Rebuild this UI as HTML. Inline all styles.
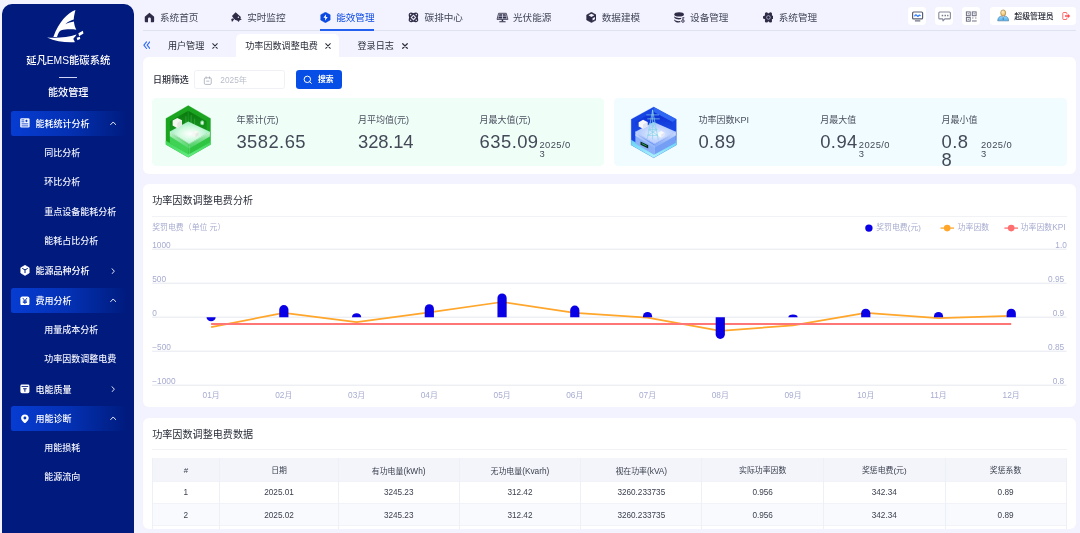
<!DOCTYPE html>
<html lang="zh-CN">
<head>
<meta charset="utf-8">
<title>延凡EMS能碳系统</title>
<style>
*{box-sizing:border-box;margin:0;padding:0}
html,body{width:1080px;height:533px;overflow:hidden}
body{background:#f2f3ff;font-family:"Liberation Sans","Noto Sans CJK SC",sans-serif;color:#2a2e3a;position:relative}
#root{position:absolute;left:0;top:0;width:1080px;height:533px;overflow:hidden;will-change:transform}
.abs{position:absolute}
/* sidebar */
#side{position:absolute;left:2.3px;top:4.2px;width:131.8px;height:540px;background:#001a7d;border-radius:10px 10px 0 0;color:#fff}
#side .logo{position:absolute;left:37.7px;top:.8px;width:60px;height:45px}
#side .title{position:absolute;left:0;width:100%;top:50.1px;text-align:center;font-size:10.3px;font-weight:500;line-height:14px}
#side .dash{position:absolute;left:56.8px;top:72.6px;width:18.2px;height:.9px;background:#cfd6f5}
#side .sub{position:absolute;left:0;width:100%;top:82px;text-align:center;font-size:10.1px;font-weight:500;line-height:14px}
.mi{position:absolute;left:9px;width:114.3px;height:25px;border-radius:2.5px;font-size:9px;font-weight:500;line-height:27px;color:#fff;white-space:nowrap}
.mi.act{background:linear-gradient(90deg,#073cd2 0%,#0431b4 50%,#01228e 85%,#001b80 100%)}
.mi .ic{position:absolute;left:8.8px;top:7.5px;width:9.8px;height:9.8px}
.mi .ic.big{left:8.9px;top:7px;width:10px;height:10.8px}
.mi .tx{position:absolute;left:24.3px;top:0}
.mi .ch{position:absolute;left:98.6px;top:9.8px;width:6.4px;height:4.3px}
.mi .ch.r{left:99.8px;top:9.5px;width:4.3px;height:6.4px}
.si{position:absolute;left:42px;font-size:9px;font-weight:500;line-height:14px;color:#eef1fc;white-space:nowrap}
/* top nav */
#nav{position:absolute;left:143.3px;top:0;width:932.7px;height:30.6px;border-bottom:1px solid #dfe2ef}
.ni{position:absolute;top:9.6px;height:15px;font-size:9.6px;line-height:15px;color:#44475a;white-space:nowrap}
.ni svg{position:absolute;left:-.1px;top:2.3px;width:10.9px;height:10.9px}
.ni span{position:absolute;left:16.2px;top:0}
.ni.act{color:#0b49e2}
#nav .ul{position:absolute;left:176.4px;top:29px;width:54.6px;height:1.6px;background:#2360f0}
.tb{position:absolute;top:6.7px;width:18.1px;height:18.1px;background:#fff;border-radius:3.4px}
.tb svg{position:absolute;left:0;top:0;width:18.1px;height:18.1px}
.ub{position:absolute;top:6.7px;width:86.2px;height:18.1px;background:#fff;border-radius:3.4px;font-size:7.9px;font-weight:500;line-height:19.2px;color:#1f2330;white-space:nowrap}
.ub .ua{position:absolute;left:7.3px;top:2.6px;width:12.4px;height:12.4px}
.ub span{position:absolute;left:24.5px;top:0}
.ub .lo{position:absolute;left:71.6px;top:3.9px;width:10px;height:10px}
/* tabs */
.tab{position:absolute;top:38.7px;font-size:9.1px;line-height:15px;color:#2a2e3a;white-space:nowrap}
.tabx{position:absolute;top:42.6px;width:6px;height:6px}
#tabact{position:absolute;left:236.2px;top:33.8px;width:102.8px;height:26px;background:#fff;border-radius:5px 5px 0 0}
/* cards */
.card{position:absolute;background:#fff;border-radius:6px}
.ct{position:absolute;left:9px;font-size:10.1px;line-height:16px;color:#2a2e3a;white-space:nowrap}
.cl{position:absolute;left:9px;right:9px;height:1px;background:#f1f2f6}
.fl{position:absolute;font-size:8.95px;font-weight:500;line-height:14px;color:#2a2e3a;white-space:nowrap}
.inp{position:absolute;border:1px solid #f0f1f6;border-radius:2.5px;background:#fff;font-size:8.3px;line-height:18.6px;color:#b9bdcb}
.inp svg{position:absolute;left:7.7px;top:4.5px;width:9.6px;height:9.6px}
.inp span{position:absolute;left:25px;top:0}
.btn{position:absolute;border-radius:3.2px;background:#074ee6;color:#fff;font-size:7.8px;font-weight:700;line-height:20.2px}
.btn svg{position:absolute;left:7px;top:4.6px;width:9.4px;height:9.4px}
.btn span{position:absolute;left:21.6px;top:0}
.stat{position:absolute;top:97.6px;height:68px;border-radius:4.5px}
.sl{position:absolute;top:16.2px;font-size:9px;line-height:12px;color:#4a4f5e;white-space:nowrap}
.sv{position:absolute;top:35.8px;font-size:18.4px;line-height:18.1px;color:#434957;white-space:nowrap;letter-spacing:.45px}
.ss{position:absolute;top:43.6px;font-size:9.4px;line-height:8.6px;color:#434957;width:34px;word-break:break-all;letter-spacing:.4px}
/* chart */
.ax{position:absolute;font-size:7.9px;line-height:11px;color:#a7acd0;white-space:nowrap}
.ax.r{text-align:right}
.ax.d,.ax .d{font-size:8.3px}
.ax.c{text-align:center}
/* table */
.tr{position:absolute;left:9.2px;width:914.2px;border-bottom:1px solid #f2f3f9}
.td{position:absolute;text-align:center;font-size:8.2px;color:#3a3f4d;white-space:nowrap;border-right:1px solid #eef0f7}
.td.th{font-size:7.9px;color:#3a3f4d}
.td.th i{font-style:normal;font-size:8.3px}
.vl{position:absolute;top:40.8px;width:1px;height:80px;background:#eef0f7}

</style>
</head>
<body><div id="root">
<div id="side">
<svg class="logo" viewBox="0 0 711 533"><g fill="#fff">
<path d="M420 60 C330 92 222 200 158 380 L202 380 C214 332 230 306 252 298 C300 286 380 285 430 293 C414 262 405 230 402 196 C370 200 330 214 300 228 C328 200 368 180 400 172 C402 140 410 100 420 60 Z"/>
<path d="M84 384 C180 396 330 386 432 350 C426 374 404 384 396 400 C396 416 416 424 410 440 C300 446 180 430 84 384 Z"/>
<path d="M455 336 L508 304 L515 338 L463 370 Z"/><path d="M435 389 L472 377 L477 402 L443 417 Z"/>
</g></svg>
<div class="title">延凡EMS能碳系统</div>
<div class="dash"></div>
<div class="sub">能效管理</div>
<div class="mi act" style="top:106.70px"><svg class="ic" viewBox="0 0 20 20"><rect x="0.4" y="0.4" width="19.2" height="19.2" rx="2.6" fill="#f4f6ff"/><g stroke="#0a3cc8" stroke-width="1.7" stroke-linecap="round"><path d="M3.800 3.900 H8 M3.800 7.700 H8 M4 11.900 H16 M4 16.100 H16"/></g><path d="M13.200 3.200 L16 6 L13.200 8.800 L10.400 6 Z" fill="#0a3cc8"/></svg><span class="tx">能耗统计分析</span><svg class="ch" viewBox="0 0 12 8"><path d="M1.2 6.8 L6 1.8 L10.8 6.8" stroke="#fff" stroke-width="1.7" fill="none" stroke-linecap="round" stroke-linejoin="round"/></svg></div>
<div class="si" style="top:141.42px">同比分析</div>
<div class="si" style="top:170.94px">环比分析</div>
<div class="si" style="top:200.46px">重点设备能耗分析</div>
<div class="si" style="top:229.98px">能耗占比分析</div>
<div class="mi" style="top:254.30px"><svg class="ic big" viewBox="0 0 20 21.6" preserveAspectRatio="none"><path d="M10 0.6 L18.4 5.2 V14.8 L10 19.4 L1.6 14.8 V5.2 Z" transform="scale(1 1.08)" stroke="#fff" stroke-width="1.2" stroke-linejoin="round" fill="#fff"/><path d="M5.2 7.2 L10 9.8 L14.8 7.2 M10 9.8 V15.4" stroke="#001a7d" stroke-width="2" fill="none" stroke-linecap="round" stroke-linejoin="round"/></svg><span class="tx">能源品种分析</span><svg class="ch r" viewBox="0 0 8 12"><path d="M1.6 1.2 L6.4 6 L1.6 10.8" stroke="#fff" stroke-width="1.7" fill="none" stroke-linecap="round" stroke-linejoin="round"/></svg></div>
<div class="mi act" style="top:283.82px"><svg class="ic" viewBox="0 0 20 20"><rect x="0.8" y="0.8" width="18.4" height="18.4" rx="4" fill="#fff"/><path d="M6 4.6 L10 9.6 L14 4.6 M10 9.6 V15.6 M6.6 10.4 H13.4 M6.6 13 H13.4" stroke="#0434c0" stroke-width="1.9" fill="none" stroke-linecap="round" stroke-linejoin="round"/></svg><span class="tx">费用分析</span><svg class="ch" viewBox="0 0 12 8"><path d="M1.2 6.8 L6 1.8 L10.8 6.8" stroke="#fff" stroke-width="1.7" fill="none" stroke-linecap="round" stroke-linejoin="round"/></svg></div>
<div class="si" style="top:318.54px">用量成本分析</div>
<div class="si" style="top:348.06px">功率因数调整电费</div>
<div class="mi" style="top:372.38px"><svg class="ic" viewBox="0 0 20 20"><rect x="0.8" y="1.2" width="18.4" height="17.6" rx="3" fill="#fff"/><rect x="3.2" y="4" width="13.6" height="1.8" fill="#001a7d"/><path d="M6.4 8.6 H13.6 V10.6 H11 V15.6 H9 V10.6 H6.4 Z" fill="#001a7d"/></svg><span class="tx">电能质量</span><svg class="ch r" viewBox="0 0 8 12"><path d="M1.6 1.2 L6.4 6 L1.6 10.8" stroke="#fff" stroke-width="1.7" fill="none" stroke-linecap="round" stroke-linejoin="round"/></svg></div>
<div class="mi act" style="top:401.90px"><svg class="ic" viewBox="0 0 20 20"><path d="M10 0.8 C5.3 0.8 2.2 4.2 2.2 8.2 C2.2 13 7.4 16.6 10 19.4 C12.6 16.6 17.8 13 17.8 8.2 C17.8 4.2 14.7 0.8 10 0.8 Z" fill="#fff"/><circle cx="10" cy="8" r="3" fill="#0434c0"/></svg><span class="tx">用能诊断</span><svg class="ch" viewBox="0 0 12 8"><path d="M1.2 6.8 L6 1.8 L10.8 6.8" stroke="#fff" stroke-width="1.7" fill="none" stroke-linecap="round" stroke-linejoin="round"/></svg></div>
<div class="si" style="top:436.62px">用能损耗</div>
<div class="si" style="top:466.14px">能源流向</div>
</div>
<div id="nav">
<div class="ni" style="left:0.5px"><svg viewBox="0 0 20 20"><path d="M10 1.2 L18.6 8.6 V17.2 A1.6 1.6 0 0 1 17 18.8 H12.6 V12.6 A2.6 2.6 0 0 0 7.4 12.6 V18.8 H3 A1.6 1.6 0 0 1 1.4 17.2 V8.6 Z" fill="#2e2c46"/></svg><span>系统首页</span></div>
<div class="ni" style="left:87.7px"><svg viewBox="0 0 20 20"><path d="M8.500 0.400 L18.200 9.400 L17.200 12 L19.900 13.600 L15.800 15.300 L14.200 18.300 L11.400 15.700 L8 14.600 L5.400 12.400 L1.800 7.300 Z" fill="#2e2c46"/><path d="M0.300 12.700 L4.400 11.600 L5.600 13.600 L1.800 18.300 Z" fill="#2e2c46"/><circle cx="13.600" cy="9.600" r="1.300" fill="#f2f3ff"/></svg><span>实时监控</span></div>
<div class="ni act" style="left:176.7px"><svg viewBox="0 0 20 20"><path d="M10 0.400 L18.600 5.200 V14.800 L10 19.600 L1.400 14.800 V5.200 Z" fill="#0b49e2" stroke="#0b49e2" stroke-width="1" stroke-linejoin="round"/><path d="M11.200 4 L6.200 10.600 H9.600 L9.200 16 L14.200 9.400 H10.800 Z" fill="#fff"/></svg><span>能效管理</span></div>
<div class="ni" style="left:265.1px"><svg viewBox="0 0 20 20" style="overflow:visible"><ellipse cx="10" cy="10" rx="10.800" ry="6.300" transform="rotate(45 10 10)" fill="#2e2c46"/><ellipse cx="10" cy="10" rx="10.800" ry="6.300" transform="rotate(-45 10 10)" fill="#2e2c46"/><path d="M10 4.600 L15.400 10 L10 15.400 L4.600 10 Z" fill="#e6e8f7"/><path d="M10 7.400 L12.600 10 L10 12.600 L7.400 10 Z" fill="#2e2c46"/><circle cx="4.800" cy="4.800" r="1.500" fill="#dcdff1"/><circle cx="15.200" cy="4.800" r="1.500" fill="#dcdff1"/><circle cx="4.800" cy="15.200" r="1.500" fill="#dcdff1"/><circle cx="15.200" cy="15.200" r="1.500" fill="#dcdff1"/></svg><span>碳排中心</span></div>
<div class="ni" style="left:353.5px"><svg viewBox="0 0 20 20" style="overflow:visible"><path d="M3 2.400 H17 L20 13.600 H0 Z" fill="#dfe1f2" stroke="#2e2c46" stroke-width="1.500" stroke-linejoin="round"/><path d="M4.300 4 H9.300 V7 H3.500 Z M10.700 4 H15.700 L16.500 7 H10.700 Z M3.200 8.400 H9.300 V12 H2.300 Z M10.700 8.400 H16.800 L17.700 12 H10.700 Z" fill="#2e2c46"/><rect x="8.600" y="14" width="2.800" height="3" fill="#2e2c46"/><rect x="4" y="16.800" width="12" height="2" rx="1" fill="#2e2c46"/></svg><span>光伏能源</span></div>
<div class="ni" style="left:442.3px"><svg viewBox="0 0 20 20"><path d="M10 0.600 L18.800 5.400 V14.600 L10 19.400 L1.200 14.600 V5.400 Z" fill="#2e2c46" stroke="#2e2c46" stroke-width="1" stroke-linejoin="round"/><path d="M10 3 L15.400 6 L10 9 L4.600 6 Z" fill="#f2f3ff"/><path d="M12 11.600 L16.400 9.200 V13.400 L12 15.800 Z" fill="#f2f3ff"/></svg><span>数据建模</span></div>
<div class="ni" style="left:530.6px"><svg viewBox="0 0 20 20"><ellipse cx="9.400" cy="4.400" rx="8.800" ry="3.900" fill="#2e2c46"/><path d="M0.600 8 C3 11.400 10 11.600 13.200 10.600 V13 C10 14.200 3 14 0.600 10.600 Z" fill="#2e2c46"/><path d="M0.600 13.400 C3 16.800 8 17.200 11.600 16.600 V19 C8 19.600 3 19.400 0.600 16 Z" fill="#2e2c46"/><circle cx="16.400" cy="16.600" r="2.300" fill="none" stroke="#2e2c46" stroke-width="1.700"/><path d="M16.400 9.600 V14.400 M16.400 10.600 H19" stroke="#2e2c46" stroke-width="1.700"/></svg><span>设备管理</span></div>
<div class="ni" style="left:619.3px"><svg viewBox="0 0 20 20"><circle cx="10" cy="10" r="7.600" fill="#2e2c46"/><circle cx="17.30" cy="10.00" r="3" fill="#2e2c46"/><circle cx="13.65" cy="16.32" r="3" fill="#2e2c46"/><circle cx="6.35" cy="16.32" r="3" fill="#2e2c46"/><circle cx="2.70" cy="10.00" r="3" fill="#2e2c46"/><circle cx="6.35" cy="3.68" r="3" fill="#2e2c46"/><circle cx="13.65" cy="3.68" r="3" fill="#2e2c46"/><circle cx="10" cy="10" r="3.300" fill="none" stroke="#c9cce4" stroke-width="1.400"/><path d="M9 8.200 L12 10 L9 11.800 Z" fill="#2e2c46" stroke="#2e2c46" stroke-width="0.400"/></svg><span>系统管理</span></div>
<div class="ul"></div>
<div class="tb" style="left:764.6px"><svg viewBox="0 0 18.100 18.100"><rect x="4.600" y="5" width="10" height="6.900" rx="1" fill="none" stroke="#5b5e73" stroke-width="1.200"/><path d="M6.900 13.900 H12.300" stroke="#5b5e73" stroke-width="1.100"/><path d="M6.800 8.900 C7.600 7.600 8.400 7.800 9 8.700 C9.600 9.600 10.200 9.700 10.800 8.700 C11.200 8 11.700 8 12.200 8.600" stroke="#2f7bff" stroke-width="1.300" fill="none" stroke-linecap="round"/></svg></div>
<div class="tb" style="left:791.7px"><svg viewBox="0 0 18.100 18.100"><path d="M4.800 5 H14.400 A1 1 0 0 1 15.400 6 V10.900 A1 1 0 0 1 14.400 11.900 H9.800 L8 13.900 L7.700 11.900 H4.800 A1 1 0 0 1 3.800 10.900 V6 A1 1 0 0 1 4.800 5 Z" fill="none" stroke="#858899" stroke-width="1.100" stroke-linejoin="round"/><rect x="6.700" y="7.800" width="1.500" height="1.500" fill="#777a8c"/><rect x="9.500" y="7.800" width="1.500" height="1.500" fill="#777a8c"/><rect x="12.100" y="7.800" width="1.300" height="1.500" fill="#777a8c"/></svg></div>
<div class="tb" style="left:818.9px"><svg viewBox="0 0 18.100 18.100"><g fill="none" stroke="#6b6e80" stroke-width="1"><rect x="4.400" y="4.900" width="3.800" height="3.800"/><rect x="10.300" y="4.900" width="3.800" height="3.800"/><rect x="4.400" y="10.400" width="3.800" height="3.800"/></g><path d="M5.700 6.800 H6.900 M11.600 6.800 H12.800 M5.700 12.300 H6.900 M10.200 11 H11.400 M13.200 11 H14.400 M10 14 H14.700" stroke="#6b6e80" stroke-width="1"/></svg></div>
<div class="ub" style="left:846.5px"><svg class="ua" viewBox="0 0 24 24"><defs><radialGradient id="hd" cx="0.4" cy="0.35" r="0.7"><stop offset="0" stop-color="#fff0c4"/><stop offset="1" stop-color="#e9b24f"/></radialGradient><linearGradient id="bd" x1="0" y1="0" x2="0" y2="1"><stop offset="0" stop-color="#9ad9fa"/><stop offset="1" stop-color="#4fb0ec"/></linearGradient></defs><path d="M1.400 23 C1.400 16.500 5.400 14.400 8.200 13.600 L12 15.800 L15.800 13.600 C18.600 14.400 22.600 16.500 22.600 23 Z" fill="url(#bd)" stroke="#3f719c" stroke-width="1.100" stroke-linejoin="round"/><path d="M12 17 V21" stroke="#2c4f73" stroke-width="1.200"/><ellipse cx="12" cy="7.600" rx="4.900" ry="5.900" fill="url(#hd)" stroke="#8a6a34" stroke-width="1"/></svg><span>超级管理员</span><svg class="lo" viewBox="0 0 20 20"><path d="M11.600 5.800 V4.600 A1.600 1.600 0 0 0 10 3 H5.200 A1.600 1.600 0 0 0 3.600 4.600 V15.400 A1.600 1.600 0 0 0 5.200 17 H10 A1.600 1.600 0 0 0 11.600 15.400 V14.200" fill="none" stroke="#ff4d4f" stroke-width="1.7" stroke-linecap="round"/><path d="M8 8.400 H13.600 V5.600 L18.400 10 L13.600 14.400 V11.600 H8 Z" fill="#ff4d4f"/></svg></div>
</div>
<svg class="abs" style="left:142.7px;top:41px;width:7.6px;height:8.4px" viewBox="0 0 15 16"><path d="M7 1.500 L1.800 8 L7 14.500 M13.400 1.500 L8.200 8 L13.400 14.500" fill="none" stroke="#2e69f8" stroke-width="2.2" stroke-linecap="round" stroke-linejoin="round"/></svg>
<div id="tabact"></div>
<div class="tab" style="left:167.9px">用户管理</div><svg class="tabx" style="left:212.1px" viewBox="0 0 10 10"><path d="M1.2 1.2 L8.8 8.8 M8.8 1.2 L1.2 8.8" stroke="#2a2e3a" stroke-width="1.7" stroke-linecap="round"/></svg>
<div class="tab" style="left:245.2px">功率因数调整电费</div><svg class="tabx" style="left:324.6px" viewBox="0 0 10 10"><path d="M1.2 1.2 L8.8 8.8 M8.8 1.2 L1.2 8.8" stroke="#2a2e3a" stroke-width="1.7" stroke-linecap="round"/></svg>
<div class="tab" style="left:357.5px">登录日志</div><svg class="tabx" style="left:401.7px" viewBox="0 0 10 10"><path d="M1.2 1.2 L8.8 8.8 M8.8 1.2 L1.2 8.8" stroke="#2a2e3a" stroke-width="2" stroke-linecap="round"/></svg>
<div class="card" id="c1" style="left:143.2px;top:56.8px;width:932.8px;height:117.6px"></div>
<div class="fl" style="left:153px;top:72.6px">日期筛选</div>
<div class="inp" style="left:194.3px;top:70.1px;width:90.5px;height:18.5px"><svg viewBox="0 0 16 16"><rect x="2.200" y="3" width="11.600" height="11" rx="2" fill="none" stroke="#a4a8b6" stroke-width="1.300"/><path d="M5.400 8.600 H10.600" stroke="#a4a8b6" stroke-width="1.300"/><path d="M5.200 1.400 V4 M10.800 1.400 V4" stroke="#a4a8b6" stroke-width="1.300" stroke-linecap="round"/></svg><span>2025年</span></div>
<div class="btn" style="left:296.3px;top:70.1px;width:45.3px;height:18.5px"><svg viewBox="0 0 16 16"><circle cx="7.400" cy="7.400" r="5.500" fill="none" stroke="#fff" stroke-width="1.700"/><path d="M11.600 11.600 L14.200 14.200" stroke="#fff" stroke-width="1.700" stroke-linecap="round"/></svg><span>搜索</span></div>
<div class="stat" style="left:152.2px;width:452.3px;background:#effff8"></div>
<div class="stat" style="left:613.9px;width:453.1px;background:#f0fcff"></div>
<div class="abs" style="left:0;top:97.6px;width:1080px;height:68px">
<div class="sl" style="left:236.4px">年累计(元)</div><div class="sv" style="left:236.4px">3582.65</div>
<div class="sl" style="left:358.1px">月平均值(元)</div><div class="sv" style="left:358.1px;letter-spacing:-0.15px">328.14</div>
<div class="sl" style="left:479.6px">月最大值(元)</div><div class="sv" style="left:479.6px">635.09</div><div class="ss" style="left:539.5px">2025/03</div>
<div class="sl" style="left:698.4px">功率因数KPI</div><div class="sv" style="left:698.4px">0.89</div>
<div class="sl" style="left:820.2px">月最大值</div><div class="sv" style="left:820.2px">0.94</div><div class="ss" style="left:858.8px">2025/03</div>
<div class="sl" style="left:941.6px">月最小值</div><div class="sv" style="left:941.6px;width:36px;white-space:normal;word-break:break-all">0.88</div><div class="ss" style="left:981.0px">2025/03</div>
</div>
<svg class="abs" style="left:158px;top:100px;width:60px;height:62px" viewBox="0 0 516 533">
<defs>
<radialGradient id="gp" cx="0.5" cy="0.55" r="0.6"><stop offset="0" stop-color="#ffffff"/><stop offset="0.45" stop-color="#d4fae2"/><stop offset="1" stop-color="#8fe9b4"/></radialGradient>
<linearGradient id="gw" x1="0" y1="0" x2="0" y2="1"><stop offset="0" stop-color="#0a790e"/><stop offset="1" stop-color="#1fae2a"/></linearGradient>
<linearGradient id="gb" x1="0" y1="0" x2="0" y2="1"><stop offset="0" stop-color="#3fd557"/><stop offset="1" stop-color="#63ee83"/></linearGradient>
<linearGradient id="gt" x1="0" y1="0" x2="0" y2="1"><stop offset="0" stop-color="#d9fbe6" stop-opacity="0.95"/><stop offset="1" stop-color="#7fe39a" stop-opacity="0.25"/></linearGradient>
</defs>
<path d="M260 48 L452 158 L452 382 L260 492 L68 382 L68 158 Z" fill="#1ba420" stroke="#1ba420" stroke-width="2" stroke-linejoin="round"/>
<path d="M260 92 L418 182 L418 300 L260 392 L102 300 L102 182 Z" fill="url(#gw)"/>
<path d="M260 92 L260 250" stroke="#2cbd38" stroke-width="5" opacity="0.6"/>
<path d="M68 352 L260 462 L452 352 L452 382 L260 492 L68 382 Z" fill="url(#gb)" stroke="#5be97c" stroke-width="2" stroke-linejoin="round"/>
<path d="M102 290 L262 385 L262 468 L102 372 Z" fill="#3fd254"/>
<path d="M262 385 L446 282 L446 366 L262 468 Z" fill="#30c443"/>
<path d="M102 270 L260 184 L446 274 L268 376 Z" fill="url(#gp)"/>
<path d="M102 270 L268 376 L446 274 L446 314 L268 420 L102 312 Z" fill="url(#gt)"/><path d="M102 272 L268 378 L446 276" fill="none" stroke="#eafff2" stroke-width="4" opacity="0.9"/>
<path d="M268 396 L268 470" stroke="#a8f5c0" stroke-width="4" opacity="0.8"/>
<path d="M240 140 V230 M285 130 V250 M315 160 V240" stroke="#bff5d2" stroke-width="3" opacity="0.55"/>
<path d="M126 176 L166 154 L206 174 L206 218 L166 242 L126 220 Z" fill="#f4f6f0"/>
<path d="M166 196 L206 174 L206 218 L166 242 Z" fill="#e2e8df"/>
<path d="M296 278 L324 262 L350 276 L350 306 L322 322 L296 308 Z" fill="#f6f8f3"/>
<path d="M322 292 L350 276 L350 306 L322 322 Z" fill="#e3e9e0"/>
<ellipse cx="380" cy="196" rx="17" ry="22" fill="#9fe8b0" opacity="0.8"/><ellipse cx="380" cy="196" rx="8" ry="12" fill="#e8fff0"/>
</svg>

<svg class="abs" style="left:624px;top:100px;width:60px;height:62px" viewBox="0 0 516 533">
<defs>
<linearGradient id="bw" x1="0" y1="0" x2="0" y2="1"><stop offset="0" stop-color="#0a2cd4"/><stop offset="1" stop-color="#2a63f0"/></linearGradient>
<radialGradient id="bp" cx="0.5" cy="0.55" r="0.6"><stop offset="0" stop-color="#eef4ff"/><stop offset="0.5" stop-color="#c4d6ff"/><stop offset="1" stop-color="#a4c0ff"/></radialGradient>
<linearGradient id="bb" x1="0" y1="0" x2="0" y2="1"><stop offset="0" stop-color="#5fd0f4"/><stop offset="1" stop-color="#b0f4fc"/></linearGradient>
<linearGradient id="bt" x1="0" y1="0" x2="0" y2="1"><stop offset="0" stop-color="#dbe7ff" stop-opacity="0.95"/><stop offset="1" stop-color="#9dbcfa" stop-opacity="0.3"/></linearGradient>
</defs>
<path d="M255 60 L450 166 L450 386 L255 496 L62 386 L62 166 Z" fill="#1645e4" stroke="#1645e4" stroke-width="2" stroke-linejoin="round"/>
<path d="M255 60 L450 166 L416 190 L255 104 Z" fill="#2f67f2"/>
<path d="M255 104 L416 190 L416 300 L255 392 L96 300 L96 190 Z" fill="url(#bw)"/>
<path d="M62 344 L255 454 L450 344 L450 386 L255 496 L62 386 Z" fill="url(#bb)" stroke="#8fe4f8" stroke-width="2" stroke-linejoin="round"/>
<path d="M98 292 L258 386 L258 470 L98 376 Z" fill="#8db1f9"/>
<path d="M258 386 L446 284 L446 368 L258 470 Z" fill="#759ff5"/>
<path d="M98 272 L255 190 L446 272 L262 376 Z" fill="url(#bp)"/>
<path d="M98 272 L262 376 L446 272 L446 306 L262 412 L98 308 Z" fill="url(#bt)"/>
<path d="M98 274 L262 378 L446 274" fill="none" stroke="#f0f5ff" stroke-width="4" opacity="0.9"/>
<path d="M262 396 L262 472" stroke="#c0dcff" stroke-width="4" opacity="0.8"/>
<g stroke="#86d4e6" stroke-width="6" fill="none" stroke-linecap="round">
<path d="M246 88 L200 334 M246 88 L294 340 M246 88 V336"/>
<path d="M196 128 H298 M204 162 H304 M222 204 H272 M214 254 H282 M206 304 H290"/>
<path d="M222 204 L282 254 M272 204 L214 254 M214 254 L290 304 M282 254 L206 304"/>
</g>
<path d="M126 192 L164 170 L202 190 L202 226 L164 248 L126 228 Z" fill="#f6f7fb"/>
<path d="M164 210 L202 190 L202 226 L164 248 Z" fill="#dfe4f2"/>
<path d="M294 282 L320 266 L346 280 L346 306 L320 322 L294 308 Z" fill="#f8f9fc"/>
<path d="M320 296 L346 280 L346 306 L320 322 Z" fill="#e1e6f3"/>
<path d="M142 356 L208 390 L208 418 L142 384 Z" fill="#0b2a1c"/>
<path d="M156 376 L192 394" stroke="#33d17a" stroke-width="6" stroke-linecap="round"/>
</svg>

<div class="card" id="c2" style="left:143.2px;top:183.9px;width:932.8px;height:223.4px"><div class="ct" style="top:8.8px">功率因数调整电费分析</div><div class="cl" style="top:31.9px"></div></div>
<div class="ax" style="left:152.2px;top:222.4px;font-size:7.9px">奖罚电费（单位 元）</div>
<div class="ax d" style="left:152.200px;top:239.6px">1000</div>
<div class="ax d" style="left:152.200px;top:273.6px">500</div>
<div class="ax d" style="left:152.200px;top:307.6px">0</div>
<div class="ax d" style="left:152.200px;top:341.6px">−500</div>
<div class="ax d" style="left:152.200px;top:375.6px">−1000</div>
<div class="ax r d" style="left:1036.9px;width:30px;top:239.6px">1.0</div>
<div class="ax r d" style="left:1034.2px;width:30px;top:273.6px">0.95</div>
<div class="ax r d" style="left:1034.2px;width:30px;top:307.6px">0.9</div>
<div class="ax r d" style="left:1034.2px;width:30px;top:341.6px">0.85</div>
<div class="ax r d" style="left:1034.2px;width:30px;top:375.6px">0.8</div>
<div class="ax c" style="left:196.1px;width:30px;top:390.0px"><span class="d">01</span>月</div>
<div class="ax c" style="left:268.8px;width:30px;top:390.0px"><span class="d">02</span>月</div>
<div class="ax c" style="left:341.6px;width:30px;top:390.0px"><span class="d">03</span>月</div>
<div class="ax c" style="left:414.3px;width:30px;top:390.0px"><span class="d">04</span>月</div>
<div class="ax c" style="left:487.1px;width:30px;top:390.0px"><span class="d">05</span>月</div>
<div class="ax c" style="left:559.8px;width:30px;top:390.0px"><span class="d">06</span>月</div>
<div class="ax c" style="left:632.5px;width:30px;top:390.0px"><span class="d">07</span>月</div>
<div class="ax c" style="left:705.3px;width:30px;top:390.0px"><span class="d">08</span>月</div>
<div class="ax c" style="left:778.0px;width:30px;top:390.0px"><span class="d">09</span>月</div>
<div class="ax c" style="left:850.8px;width:30px;top:390.0px"><span class="d">10</span>月</div>
<div class="ax c" style="left:923.5px;width:30px;top:390.0px"><span class="d">11</span>月</div>
<div class="ax c" style="left:996.2px;width:30px;top:390.0px"><span class="d">12</span>月</div>
<div class="ax" style="left:876.200px;top:222.400px">奖罚电费(元)</div><div class="ax" style="left:957.600px;top:222.400px">功率因数</div><div class="ax" style="left:1020.600px;top:222.400px">功率因数<span class="d">KPI</span></div>
<svg class="abs" style="left:0;top:0" width="1080" height="533" viewBox="0 0 1080 533">
<line x1="152.200" x2="1066.500" y1="249.2" y2="249.2" stroke="#e3e5ee" stroke-width="0.900"/>
<line x1="152.200" x2="1066.500" y1="283.2" y2="283.2" stroke="#e3e5ee" stroke-width="0.900"/>
<line x1="152.200" x2="1066.500" y1="317.2" y2="317.2" stroke="#e3e5ee" stroke-width="0.900"/>
<line x1="152.200" x2="1066.500" y1="351.2" y2="351.2" stroke="#e3e5ee" stroke-width="0.900"/>
<line x1="152.200" x2="1066.500" y1="385.2" y2="385.2" stroke="#e3e5ee" stroke-width="0.900"/>
<polyline points="211.1,327.2 283.8,312.8 356.6,322.2 429.3,312.3 502.1,302 574.8,312.8 647.5,317.7 720.3,330.8 793.0,325.4 865.8,312.8 938.5,318.2 1011.2,315.9" fill="none" stroke="#ffa62b" stroke-width="1.700" stroke-linejoin="round"/>
<line x1="211.1" x2="1011.2" y1="324" y2="324" stroke="#ff7676" stroke-width="2"/>
<path d="M206.50 317.2 V317.20 A4.60 4.10 0 0 0 215.70 317.20 V317.2 Z" fill="#0a00e6"/>
<path d="M279.24 317.2 V309.70 A4.60 4.60 0 0 1 288.44 309.70 V317.2 Z" fill="#0a00e6"/>
<path d="M351.98 317.2 V317.20 A4.60 4.00 0 0 1 361.18 317.20 V317.2 Z" fill="#0a00e6"/>
<path d="M424.72 317.2 V308.80 A4.60 4.60 0 0 1 433.92 308.80 V317.2 Z" fill="#0a00e6"/>
<path d="M497.46 317.2 V298.00 A4.60 4.60 0 0 1 506.66 298.00 V317.2 Z" fill="#0a00e6"/>
<path d="M570.20 317.2 V310.20 A4.60 4.60 0 0 1 579.40 310.20 V317.2 Z" fill="#0a00e6"/>
<path d="M642.94 317.2 V316.50 A4.60 4.60 0 0 1 652.14 316.50 V317.2 Z" fill="#0a00e6"/>
<path d="M715.68 317.2 V334.30 A4.60 4.60 0 0 0 724.88 334.30 V317.2 Z" fill="#0a00e6"/>
<path d="M788.42 317.2 V317.20 A4.60 2.60 0 0 1 797.62 317.20 V317.2 Z" fill="#0a00e6"/>
<path d="M861.16 317.2 V313.30 A4.60 4.60 0 0 1 870.36 313.30 V317.2 Z" fill="#0a00e6"/>
<path d="M933.90 317.2 V316.50 A4.60 4.60 0 0 1 943.10 316.50 V317.2 Z" fill="#0a00e6"/>
<path d="M1006.64 317.2 V313.30 A4.60 4.60 0 0 1 1015.84 313.30 V317.2 Z" fill="#0a00e6"/>
<circle cx="868.900" cy="228.100" r="3.700" fill="#0a00e6"/>
<line x1="940.500" x2="954" y1="228.100" y2="228.100" stroke="#ffa62b" stroke-width="1.300"/><circle cx="947.200" cy="228.100" r="3.300" fill="#ffa62b"/>
<line x1="1004.400" x2="1018" y1="228.100" y2="228.100" stroke="#ff6e6e" stroke-width="1.300"/><circle cx="1011.200" cy="228.100" r="3.300" fill="#ff6e6e"/>
</svg>
<div class="card" id="c3" style="left:143.2px;top:417.6px;width:932.8px;height:111px;overflow:hidden"><div class="ct" style="top:9.5px">功率因数调整电费数据</div><div class="cl" style="top:31.6px"></div>
<div class="tr" style="top:40.8px;height:23.3px;background:#f3f5fa"></div>
<div class="td th" style="left:9.2px;width:68.0px;top:40.8px;height:23.3px;line-height:26.7px">#</div>
<div class="td th" style="left:77.2px;width:118.3px;top:40.8px;height:23.3px;line-height:26.7px">日期</div>
<div class="td th" style="left:195.5px;width:121.0px;top:40.8px;height:23.3px;line-height:26.7px">有功电量<i>(kWh)</i></div>
<div class="td th" style="left:316.5px;width:121.5px;top:40.8px;height:23.3px;line-height:26.7px">无功电量<i>(Kvarh)</i></div>
<div class="td th" style="left:438.0px;width:121.2px;top:40.8px;height:23.3px;line-height:26.7px">视在功率<i>(kVA)</i></div>
<div class="td th" style="left:559.2px;width:121.6px;top:40.8px;height:23.3px;line-height:26.7px">实际功率因数</div>
<div class="td th" style="left:680.8px;width:121.6px;top:40.8px;height:23.3px;line-height:26.7px">奖惩电费(元)</div>
<div class="td th" style="left:802.4px;width:121.0px;top:40.8px;height:23.3px;line-height:26.7px">奖惩系数</div>
<div class="tr" style="top:64.1px;height:21.9px;background:#fff"></div>
<div class="td" style="left:9.2px;width:68.0px;top:64.1px;height:21.9px;line-height:22.5px">1</div>
<div class="td" style="left:77.2px;width:118.3px;top:64.1px;height:21.9px;line-height:22.5px">2025.01</div>
<div class="td" style="left:195.5px;width:121.0px;top:64.1px;height:21.9px;line-height:22.5px">3245.23</div>
<div class="td" style="left:316.5px;width:121.5px;top:64.1px;height:21.9px;line-height:22.5px">312.42</div>
<div class="td" style="left:438.0px;width:121.2px;top:64.1px;height:21.9px;line-height:22.5px">3260.233735</div>
<div class="td" style="left:559.2px;width:121.6px;top:64.1px;height:21.9px;line-height:22.5px">0.956</div>
<div class="td" style="left:680.8px;width:121.6px;top:64.1px;height:21.9px;line-height:22.5px">342.34</div>
<div class="td" style="left:802.4px;width:121.0px;top:64.1px;height:21.9px;line-height:22.5px">0.89</div>
<div class="tr" style="top:86.0px;height:22.8px;background:#f9fafd"></div>
<div class="td" style="left:9.2px;width:68.0px;top:86.0px;height:22.8px;line-height:23.4px">2</div>
<div class="td" style="left:77.2px;width:118.3px;top:86.0px;height:22.8px;line-height:23.4px">2025.02</div>
<div class="td" style="left:195.5px;width:121.0px;top:86.0px;height:22.8px;line-height:23.4px">3245.23</div>
<div class="td" style="left:316.5px;width:121.5px;top:86.0px;height:22.8px;line-height:23.4px">312.42</div>
<div class="td" style="left:438.0px;width:121.2px;top:86.0px;height:22.8px;line-height:23.4px">3260.233735</div>
<div class="td" style="left:559.2px;width:121.6px;top:86.0px;height:22.8px;line-height:23.4px">0.956</div>
<div class="td" style="left:680.8px;width:121.6px;top:86.0px;height:22.8px;line-height:23.4px">342.34</div>
<div class="td" style="left:802.4px;width:121.0px;top:86.0px;height:22.8px;line-height:23.4px">0.89</div>
<div class="tr" style="top:108.8px;height:22.6px;background:#fff"></div>
<div class="td" style="left:9.2px;width:68.0px;top:108.8px;height:22.6px;line-height:23.2px"></div>
<div class="td" style="left:77.2px;width:118.3px;top:108.8px;height:22.6px;line-height:23.2px"></div>
<div class="td" style="left:195.5px;width:121.0px;top:108.8px;height:22.6px;line-height:23.2px"></div>
<div class="td" style="left:316.5px;width:121.5px;top:108.8px;height:22.6px;line-height:23.2px"></div>
<div class="td" style="left:438.0px;width:121.2px;top:108.8px;height:22.6px;line-height:23.2px"></div>
<div class="td" style="left:559.2px;width:121.6px;top:108.8px;height:22.6px;line-height:23.2px"></div>
<div class="td" style="left:680.8px;width:121.6px;top:108.8px;height:22.6px;line-height:23.2px"></div>
<div class="td" style="left:802.4px;width:121.0px;top:108.8px;height:22.6px;line-height:23.2px"></div>
<div class="vl" style="left:9.2px"></div>
</div>
</div></body>
</html>
